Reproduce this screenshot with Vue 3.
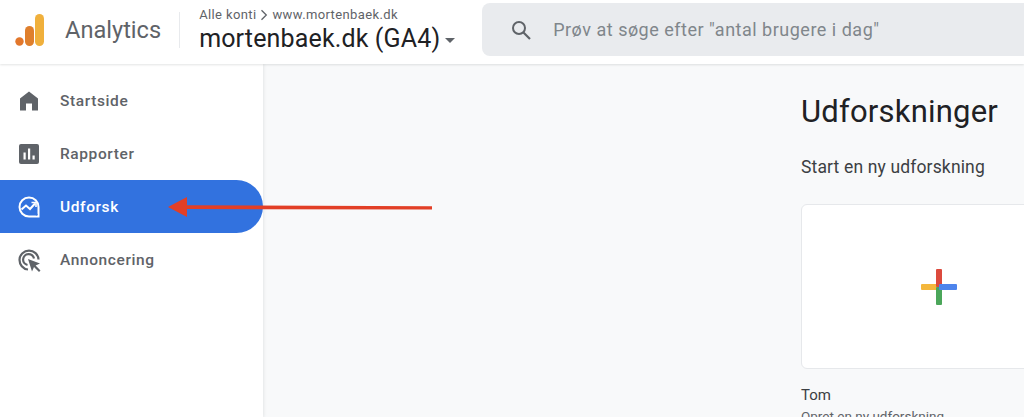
<script setup>
const navItems = [
  { label: 'Startside', icon: 'home' },
  { label: 'Rapporter', icon: 'reports' },
  { label: 'Udforsk', icon: 'explore', active: true },
  { label: 'Annoncering', icon: 'ads' }
]
</script>

<template>
  <div class="page">
    <header class="topbar">
      <svg class="logo" width="30" height="32" viewBox="0 0 30 32" aria-hidden="true">
        <rect x="20" y="0" width="9" height="32" rx="4.5" fill="#f0b03c" />
        <rect x="10" y="12" width="9" height="20" rx="4.5" fill="#df7f2c" />
        <circle cx="4.5" cy="27.5" r="4.2" fill="#e2772b" />
      </svg>
      <span class="product">Analytics</span>
      <span class="divider"></span>
      <div class="account">
        <div class="crumbs">
          <span>Alle konti</span>
          <svg width="8" height="12" viewBox="0 0 8 12" aria-hidden="true"><path d="M1.5 1.2 6.3 6 1.5 10.8" fill="none" stroke="#5f6368" stroke-width="1.3" /></svg>
          <span>www.mortenbaek.dk</span>
        </div>
        <div class="property">
          <span>mortenbaek.dk (GA4)</span>
          <i class="caret"></i>
        </div>
      </div>
      <div class="search">
        <svg width="24" height="24" viewBox="0 0 24 24" aria-hidden="true">
          <circle cx="10" cy="10" r="6" fill="none" stroke="#5f6368" stroke-width="2" />
          <path d="M14.5 14.5 21 21" stroke="#5f6368" stroke-width="2.2" />
        </svg>
        <span class="placeholder">Prøv at søge efter "antal brugere i dag"</span>
      </div>
    </header>

    <div class="body">
      <nav class="sidebar">
        <a v-for="item in navItems" :key="item.label" class="nav-item" :class="{ active: item.active }">
          <svg class="nav-icon" width="24" height="24" viewBox="0 0 24 24" aria-hidden="true">
            <path v-if="item.icon === 'home'" d="M12 2.5 21 9.5V21.5H15V14.5H9V21.5H3V9.5Z" fill="#5f6368" />
            <template v-else-if="item.icon === 'reports'">
              <rect x="2" y="2" width="20" height="20" rx="2" fill="#5f6368" />
              <rect x="6.5" y="10.5" width="2.2" height="7" fill="#fff" />
              <rect x="11" y="6.5" width="2.2" height="11" fill="#fff" />
              <rect x="15.5" y="13.5" width="2.2" height="4" fill="#fff" />
            </template>
            <template v-else-if="item.icon === 'explore'">
              <path d="M12 2.5a9.5 9.5 0 1 0 0 19H21.5V12A9.5 9.5 0 0 0 12 2.5Z" fill="none" stroke="#fff" stroke-width="2" />
              <path d="M4.5 14.5 9 10.5l4 3.5 5-5.5" fill="none" stroke="#fff" stroke-width="2" />
              <path d="M14.5 7.5h4.5V12" fill="none" stroke="#fff" stroke-width="1.6" />
              <circle cx="19.6" cy="19.6" r="1" fill="#3272df" />
            </template>
            <template v-else>
              <path d="M11 21.5a9.5 9.5 0 1 1 10.5-10" fill="none" stroke="#5f6368" stroke-width="2.2" />
              <path d="M10.5 17a5.5 5.5 0 1 1 6.5-6.5" fill="none" stroke="#5f6368" stroke-width="2.2" />
              <path d="M11 11 23 15.5 18.6 17.6 23.5 22.5 22 24 17 19 15 23.5Z" fill="#5f6368" />
            </template>
          </svg>
          <span>{{ item.label }}</span>
        </a>
      </nav>

      <main class="content">
        <h1>Udforskninger</h1>
        <h2>Start en ny udforskning</h2>
        <div class="card">
          <svg width="36" height="36" viewBox="0 0 36 36" aria-hidden="true">
            <rect x="0" y="15" width="18" height="6" rx="1" fill="#f4b73c" />
            <rect x="15" y="0" width="6" height="18" rx="1" fill="#dc4a3d" />
            <rect x="15" y="18" width="6" height="18" rx="1" fill="#4ba65a" />
            <rect x="18" y="15" width="18" height="6" rx="1" fill="#4d84ec" />
          </svg>
        </div>
        <div class="card-title">Tom</div>
        <div class="card-sub">Opret en ny udforskning</div>
      </main>
    </div>

    <svg class="arrow" width="266" height="24" viewBox="0 0 266 24" aria-hidden="true">
      <path d="M20 9.3 265 10.3V13.6L20 13Z" fill="#e23f26" />
      <path d="M1 11 20 1V21Z" fill="#e23f26" />
    </svg>
  </div>
</template>

<style>
html, body { margin: 0; overflow: hidden; background: #fff; }
</style>

<style scoped>
.page {
  position: relative;
  width: 1024px;
  height: 417px;
  overflow: hidden;
  font-family: Roboto, "Liberation Sans", sans-serif;
  background: #f8f9fa;
}
.topbar {
  position: relative;
  z-index: 2;
  display: flex;
  align-items: center;
  height: 64px;
  padding-left: 15px;
  background: #fff;
  box-shadow: 0 1px 2px rgba(60, 64, 67, 0.14);
}
.logo { flex: none; margin-top: -4px; }
.product {
  margin-left: 20px;
  font-size: 23.6px;
  color: #5f6368;
  margin-top: -4px;
}
.divider {
  width: 1px;
  height: 36px;
  margin: -4px 19px 0 18px;
  background: #e8eaed;
}
.account { width: 283px; flex: none; margin-top: -4px; }
.crumbs {
  display: flex;
  align-items: center;
  gap: 4px;
  font-size: 13px;
  line-height: 16px;
  letter-spacing: 0.38px;
  color: #5f6368;
}
.property {
  display: flex;
  align-items: center;
  font-size: 25px;
  line-height: 29px;
  letter-spacing: 0.15px;
  color: #202124;
  margin-top: 1px;
}
.caret {
  width: 0;
  height: 0;
  margin: 3px 0 0 5px;
  border-left: 5px solid transparent;
  border-right: 5px solid transparent;
  border-top: 5px solid #5f6368;
}
.search {
  flex: 1;
  display: flex;
  align-items: center;
  gap: 20px;
  height: 53px;
  margin-top: -5px;
  padding-left: 27px;
  border-radius: 8px 0 0 8px;
  background: #e9ebee;
}
.placeholder { font-size: 18px; letter-spacing: 0.5px; color: #80868b; }
.body { display: flex; height: 353px; }
.sidebar {
  width: 263px;
  flex: none;
  padding-top: 10px;
  background: #fff;
  box-shadow: 1px 0 3px rgba(60, 64, 67, 0.1);
}
.nav-item {
  display: flex;
  align-items: center;
  gap: 19px;
  height: 53px;
  padding-left: 17px;
  font-size: 15.5px;
  font-weight: 500;
  letter-spacing: 0.6px;
  color: #5f6368;
}
.nav-item.active {
  color: #fff;
  background: #3272df;
  border-radius: 0 26.5px 26.5px 0;
}
.nav-icon { flex: none; }
.content { flex: 1; padding: 28px 0 0 538px; min-width: 0; }
h1 {
  margin: 0;
  font-size: 31px;
  font-weight: 400;
  line-height: 40px;
  letter-spacing: 0.2px;
  color: #202124;
  white-space: nowrap;
}
h2 {
  margin: 25px 0 0;
  font-size: 17.5px;
  font-weight: 400;
  line-height: 20px;
  letter-spacing: 0.15px;
  color: #3c4043;
  white-space: nowrap;
}
.card {
  display: flex;
  align-items: center;
  justify-content: center;
  box-sizing: border-box;
  width: 276px;
  height: 165px;
  margin-top: 27px;
  border: 1px solid #e6e8eb;
  border-radius: 6px;
  background: #fff;
}
.card-title {
  margin-top: 17px;
  font-size: 15px;
  line-height: 18px;
  color: #3c4043;
  white-space: nowrap;
}
.card-sub {
  margin-top: 4px;
  font-size: 13.5px;
  line-height: 16px;
  color: #5f6368;
  white-space: nowrap;
}
.arrow { position: absolute; left: 167px; top: 196px; z-index: 3; }
</style>
